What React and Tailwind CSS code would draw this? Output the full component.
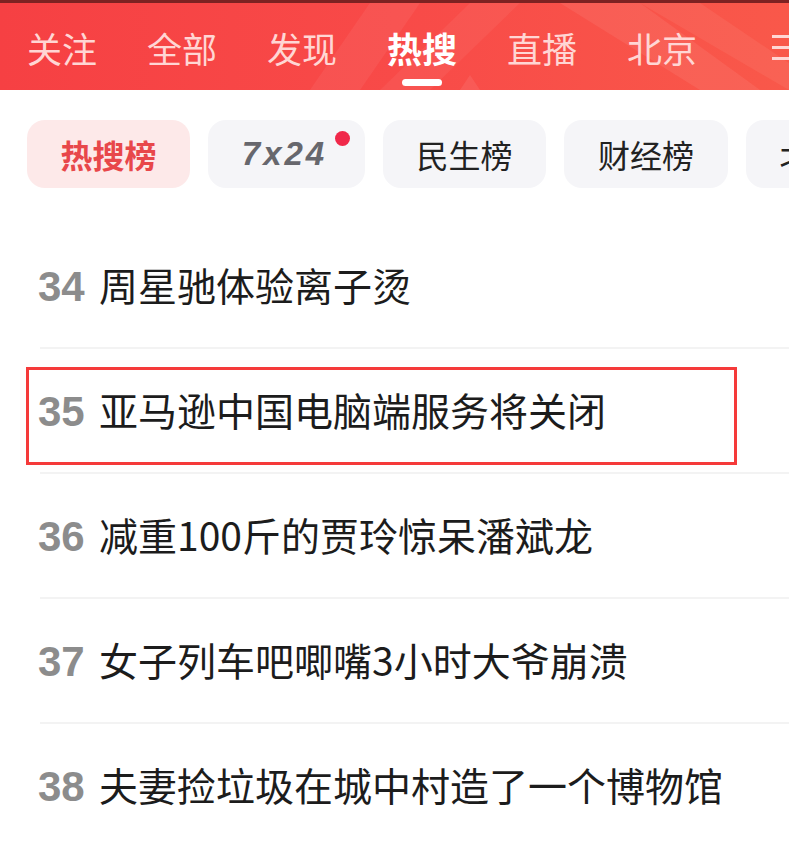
import { useState } from "react";

const tabs = ["关注", "全部", "发现", "热搜", "直播", "北京"];

const chips = [
  { label: "热搜榜", active: true, w: "w-[163px]" },
  { label: "7x24", dot: true, w: "w-[157px]" },
  { label: "民生榜", w: "w-[163px]" },
  { label: "财经榜", w: "w-[164px]" },
  { label: "北京榜", w: "w-[163px]" },
];

const items = [
  { rank: 34, title: "周星驰体验离子烫" },
  { rank: 35, title: "亚马逊中国电脑端服务将关闭", marked: true },
  { rank: 36, title: "减重100斤的贾玲惊呆潘斌龙" },
  { rank: 37, title: "女子列车吧唧嘴3小时大爷崩溃" },
  { rank: 38, title: "夫妻捡垃圾在城中村造了一个博物馆" },
];

const font = "font-['Noto_Sans_CJK_SC','Noto_Sans',sans-serif]";

const App = () => {
  const [active] = useState("热搜");

  return (
    <div className={`w-[789px] h-[846px] overflow-hidden bg-white ${font}`}>
      {/* top nav */}
      <div className="h-[3px] bg-[#7d2222]" />
      <div className="relative h-[87px] overflow-hidden bg-gradient-to-r from-[#f64043] via-[#f84a48] to-[#f9584a]">
        <svg className="absolute inset-0" width="789" height="87" viewBox="0 0 789 87">
          <polygon points="310,87 370,0 420,0 360,87" fill="#ffffff" opacity="0.06" />
          <polygon points="380,87 470,0 520,0 430,87" fill="#ffffff" opacity="0.05" />
          <polygon points="560,0 640,0 760,87 700,87" fill="#ffffff" opacity="0.07" />
          <polygon points="640,0 700,0 789,60 789,87" fill="#ffb0a0" opacity="0.12" />
          <polygon points="460,87 470,72 480,87" fill="#ffffff" opacity="0.08" />
        </svg>
        <div className="relative flex h-full items-center pl-[27px] pt-[2px]">
          {tabs.map((t) => (
            <div key={t} className="relative mr-[50px] flex shrink-0 flex-col items-center">
              <span
                className={`whitespace-nowrap text-[35px] leading-none ${
                  t === active ? "font-bold text-white" : "text-[#ffd6d4]"
                }`}
              >
                {t}
              </span>
              {t === active && (
                <span className="absolute top-[49px] h-[7px] w-[40px] rounded-full bg-white" />
              )}
            </div>
          ))}
          <div className="ml-[25px] flex shrink-0 flex-col gap-[8px]">
            <span className="h-[3px] w-[24px] bg-[#ffd6d4]" />
            <span className="h-[3px] w-[24px] bg-[#ffd6d4]" />
            <span className="h-[3px] w-[24px] bg-[#ffd6d4]" />
          </div>
        </div>
      </div>

      {/* chips */}
      <div className="flex gap-[18px] pl-[27px] pt-[30px]">
        {chips.map((c) => (
          <div
            key={c.label}
            className={`relative flex h-[68px] ${c.w} shrink-0 items-center justify-center rounded-[18px] ${
              c.active ? "bg-[#fde9e9]" : "bg-[#f5f5f8]"
            }`}
          >
            {c.dot ? (
              <span className="pr-[4px] font-['Liberation_Sans',sans-serif] text-[33px] font-bold italic tracking-[3px] text-[#67676d]">
                {c.label}
              </span>
            ) : (
              <span
                className={`whitespace-nowrap text-[32px] ${
                  c.active ? "font-bold text-[#e8474a]" : "text-[#222]"
                }`}
              >
                {c.label}
              </span>
            )}
            {c.dot && (
              <span className="absolute left-[127px] top-[11px] h-[15px] w-[15px] rounded-full bg-[#f0284a]" />
            )}
          </div>
        ))}
      </div>

      {/* list */}
      <div className="mt-[36px] pl-[40px]">
        {items.map((it) => (
          <div
            key={it.rank}
            className="relative flex h-[125px] items-center border-b-2 border-[#f3f3f3] pb-[2px]"
          >
            <span className="-ml-[2px] mt-[5px] w-[61px] shrink-0 font-['Liberation_Sans',sans-serif] text-[42px] font-bold leading-none text-[#8c8c8c]">
              {it.rank}
            </span>
            <span className="whitespace-nowrap text-[39px] leading-none text-[#1c1c1c]">{it.title}</span>
            {it.marked && (
              <div className="absolute left-[-14px] top-[18px] h-[98px] w-[711px] border-[3px] border-[#f53a3a]" />
            )}
          </div>
        ))}
      </div>
    </div>
  );
};

export default App;
